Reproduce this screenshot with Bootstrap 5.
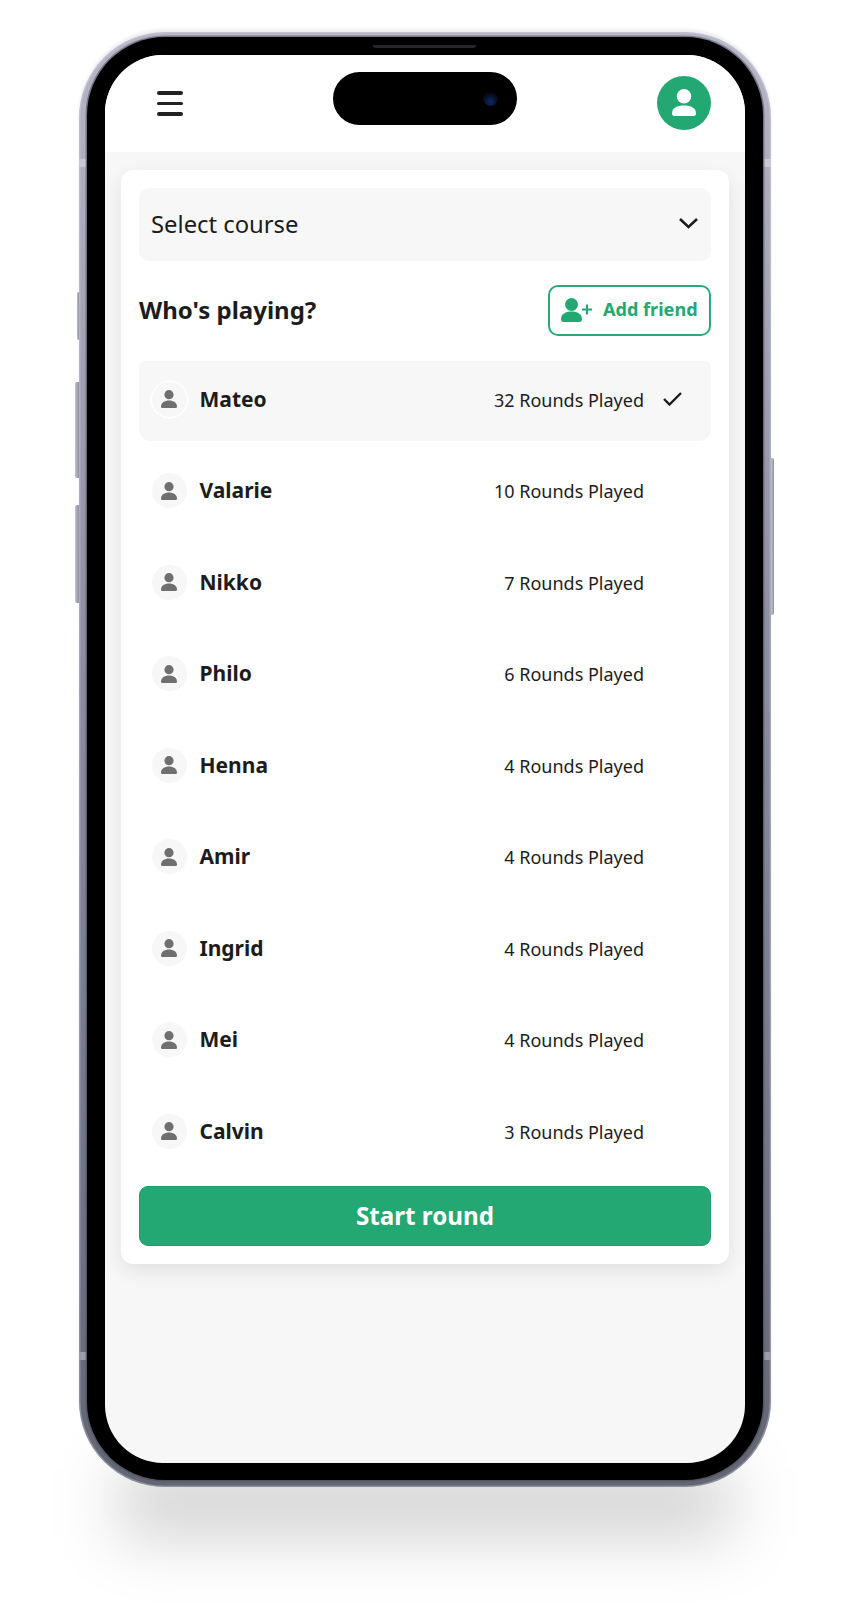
<!DOCTYPE html>
<html lang="en">
<head>
    <meta charset="UTF-8">
    <meta name="viewport" content="width=device-width, initial-scale=1.0">
    <title>Who's playing</title>
    <link href="https://cdn.jsdelivr.net/npm/bootstrap@5.3.0/dist/css/bootstrap.min.css" rel="stylesheet">
    <style>
        body { background: #fff; font-family: "Noto Sans", sans-serif; color: #1c1c1c; width: 850px; height: 1616px; overflow: hidden; }
        .phone-frame {
            position: relative;
            width: 692px; height: 1455px;
            margin: 32px 0 0 79px;
            padding: 5px 8px 7px 8px;
            border-radius: 86px;
            background: linear-gradient(to bottom, #b6b6c6, #8f90a2 40%, #6c7080 85%, #626673);
            box-shadow: 0 -3px 3px rgba(200,200,210,.3), inset 0 0 0 1.5px rgba(215,215,228,.35);
        }
        .phone-frame::before {
            content: ""; position: absolute; z-index: -1;
            left: 40px; right: 40px; bottom: -50px; height: 70px;
            background: rgba(0,0,0,.18);
            filter: blur(32px);
        }
        .side-btn { position: absolute; width: 4px; background: linear-gradient(to right, #c4c4d0, #8d8e9e); border-radius: 2px 0 0 2px; }
        .side-a { left: -2px; top: 260px; height: 48px; width: 2px; }
        .side-b { left: -4px; top: 350px; height: 96px; }
        .side-c { left: -4px; top: 473px; height: 98px; }
        .side-d { right: -3px; top: 426px; height: 157px; width: 3px; border-radius: 0 2px 2px 0; }
        .frame-band { position: absolute; width: 7px; height: 8px; background: #c9c9d4; }
        .band-a { left: 0; top: 127px; }
        .band-b { right: 0; top: 127px; }
        .band-c { left: 0; top: 1320px; background: #9a9ca8; }
        .band-d { right: 0; top: 1320px; background: #9a9ca8; }
        .phone-shell { position: relative; height: 100%; padding: 18px 18px 17px 18px; background: #000; border-radius: 78px; box-shadow: 0 0 0 1.5px rgba(70,72,85,.55); }
        .speaker { position: absolute; left: 286px; top: 8px; width: 103px; height: 3px; background: #25252b; border-radius: 0 0 4px 4px; }
        .island { position: absolute; left: 246px; top: 35px; width: 184px; height: 53px; background: #000; border-radius: 27px; z-index: 2; }
        .island-cam { position: absolute; left: 150px; top: 19px; width: 15px; height: 15px; border-radius: 50%; background: radial-gradient(circle at 50% 70%, #0d2a66 0, #07102e 45%, #000 75%); }
        .phone-screen { height: 100%; background: #f7f7f7; border-radius: 58px; overflow: hidden; }
        .app-top { height: 97px; background: #fff; padding: 0 34px 0 52px; }
        .burger { width: 26px; }
        .burger span { display: block; height: 3.500px; background: #222; border-radius: 2px; margin-bottom: 7px; }
        .burger span:last-child { margin-bottom: 0; }
        .me-avatar { width: 54px; height: 54px; background: #24a873; margin-top: -2px; }
        .play-card { margin: 18px 16px 0 16px; padding: 18px; border: 0; border-radius: 12px; box-shadow: 0 7px 20px rgba(0,0,0,.09); }
        .course-select { height: 73px; background: #f7f7f7; border-radius: 10px; padding: 0 13px 2px 12px; font-size: 23.800px; margin-bottom: 24px; }
        .course-label { padding-top: 2px; }
        .who-row { height: 51px; margin-bottom: 25px; }
        .who-title { font-size: 24px; font-weight: 700; margin: 0; color: #1c1c1c; }
        .btn-friend { width: 163px; height: 51px; padding: 0 0 2px 11px; border: 2px solid #2aaa78; border-radius: 10px; color: #24a873; font-size: 18.100px; font-weight: 700; gap: 11px; background: #fff; }
        .player-list { gap: 11.500px; }
        .player-row { height: 80px; padding: 0 0 4px 12.500px; border: 0; border-radius: 12px; background: transparent; color: #1c1c1c; }
        .player-row.is-picked { background: #f7f7f7; }
        .player-av { width: 35px; height: 35px; background: #f7f7f7; flex-shrink: 0; }
        .is-picked .player-av { box-shadow: 0 0 0 1.500px #fff; }
        .player-name { font-size: 21px; font-weight: 700; margin-left: 13px; margin-top: .5px; }
        .player-rounds { font-size: 18px; margin-left: auto; margin-top: 2px; }
        .player-tick { width: 67px; flex-shrink: 0; padding-left: 19px; }
        .btn-start { height: 60px; margin-top: 13px; background: #24a873; border: 1px solid #1f9e6b; border-radius: 9px; color: #fff; font-size: 24.200px; font-weight: 700; }
    </style>
</head>
<body>
    <div class="phone-frame">
        <span class="side-btn side-a"></span>
        <span class="side-btn side-b"></span>
        <span class="side-btn side-c"></span>
        <span class="side-btn side-d"></span>
        <span class="frame-band band-a"></span>
        <span class="frame-band band-b"></span>
        <span class="frame-band band-c"></span>
        <span class="frame-band band-d"></span>
        <div class="phone-shell">
            <div class="speaker"></div>
            <div class="island"><div class="island-cam"></div></div>
            <div class="phone-screen">
                <div class="app-top d-flex align-items-center justify-content-between">
                    <div class="burger"><span></span><span></span><span></span></div>
                    <div class="me-avatar rounded-circle d-flex align-items-center justify-content-center">
                        <svg width="24" height="28" viewBox="0 0 24 28" fill="#fff"><circle cx="12" cy="7.300" r="7.200"/><path d="M0 24.500C0 19 5 16.600 12 16.600s12 2.400 12 7.900c0 1.600-.8 2.500-2.400 2.500H2.400C.8 27 0 26.100 0 24.500z"/></svg>
                    </div>
                </div>
                <div class="card play-card">
                    <div class="course-select d-flex align-items-center justify-content-between">
                        <span class="course-label">Select course</span>
                        <svg width="19" height="11" viewBox="0 0 19 11" fill="none" stroke="#1c1c1c" stroke-width="2.500"><path d="M1 1l8.500 8 8.500-8"/></svg>
                    </div>
                    <div class="who-row d-flex align-items-center justify-content-between">
                        <h2 class="who-title">Who's playing?</h2>
                        <button type="button" class="btn btn-friend d-flex align-items-center">
                            <svg width="31" height="24" viewBox="0 0 31 24" fill="#24a873"><circle cx="10.500" cy="6.500" r="6.500"/><path d="M0 21c0-5 4.500-7.500 10.500-7.500S21 16 21 21c0 2-1 3-2.500 3h-16C1 24 0 23 0 21z"/><path d="M21 11.500h10M26 6.500v10" stroke="#24a873" stroke-width="2" fill="none"/></svg>
                            Add friend
                        </button>
                    </div>
                    <div class="list-group player-list" id="players"></div>
                    <button type="button" class="btn btn-start w-100">Start round</button>
                </div>
            </div>
        </div>
    </div>
    <script>
        const players = [
            ['Mateo', 32], ['Valarie', 10], ['Nikko', 7], ['Philo', 6], ['Henna', 4],
            ['Amir', 4], ['Ingrid', 4], ['Mei', 4], ['Calvin', 3]
        ];
        const personIcon = '<svg width="16" height="18" viewBox="0 0 16 18" fill="#6f6f6f"><circle cx="8" cy="4.700" r="4.600"/><path d="M0 16.500C0 12.500 3.500 10.400 8 10.400s8 2.100 8 6.100c0 1-.6 1.500-1.500 1.500h-13C.6 18 0 17.500 0 16.500z"/></svg>';
        const tick = '<svg width="19" height="14" viewBox="0 0 19 14" fill="none" stroke="#1c1c1c" stroke-width="2.400"><path d="M1 7l5.500 5.500L18 1"/></svg>';
        document.getElementById('players').innerHTML = players.map((p, i) =>
            '<div class="list-group-item player-row d-flex align-items-center' + (i === 0 ? ' is-picked' : '') + '">' +
            '<div class="player-av rounded-circle d-flex align-items-center justify-content-center">' + personIcon + '</div>' +
            '<span class="player-name">' + p[0] + '</span>' +
            '<span class="player-rounds">' + p[1] + ' Rounds Played</span>' +
            '<span class="player-tick d-flex">' + (i === 0 ? tick : '') + '</span>' +
            '</div>').join('');
    </script>
    <script src="https://cdn.jsdelivr.net/npm/bootstrap@5.3.0/dist/js/bootstrap.bundle.min.js"></script>
</body>
</html>
